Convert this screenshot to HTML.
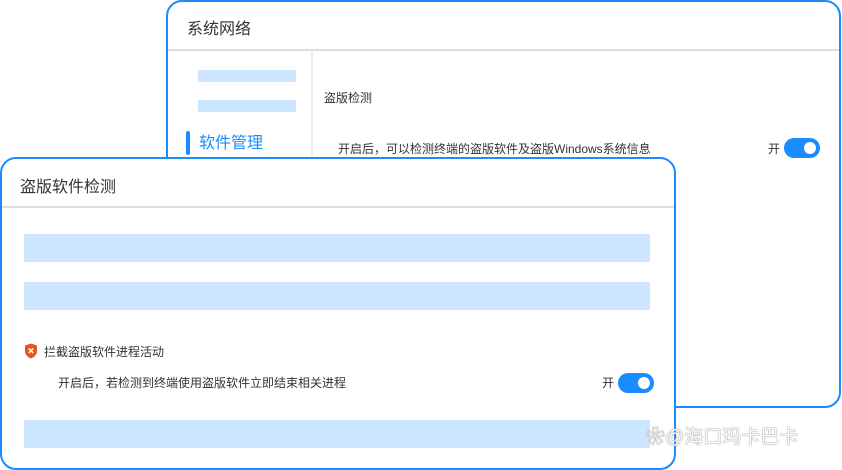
<!DOCTYPE html>
<html><head><meta charset="utf-8"><style>
*{margin:0;padding:0;box-sizing:border-box}
body{width:842px;height:470px;background:#fff;position:relative;overflow:hidden;font-family:"Liberation Sans","Noto Sans CJK SC",sans-serif;color:#333}
.card{position:absolute;background:#fff;border:2px solid #1a8cff;border-radius:16px}
.abs{position:absolute}
.bar{position:absolute;background:#cce6ff}
.tog{position:absolute;width:36px;height:20px;border-radius:10px;background:#1a8cff}
.tog::after{content:"";position:absolute;right:4px;top:4px;width:12px;height:12px;border-radius:50%;background:#fff}
.t12{font-size:12px;line-height:14px}
</style></head><body>
<div class="card" style="left:166px;top:0;width:675px;height:408px">
  <div class="abs" style="left:19px;top:18px;font-size:16px;line-height:20px;color:#333">系统网络</div>
  <div class="abs" style="left:0;top:47px;width:671px;height:2px;background:#ddd"></div>
  <div class="abs" style="left:143px;top:49px;width:2px;height:360px;background:#eee"></div>
  <div class="bar" style="left:30px;top:68px;width:98px;height:12px"></div>
  <div class="bar" style="left:30px;top:98px;width:98px;height:12px"></div>
  <div class="abs" style="left:18px;top:129px;width:4px;height:24px;border-radius:2px;background:#1a8cff"></div>
  <div class="abs" style="left:31px;top:132px;font-size:16px;line-height:20px;color:#1a8cff">软件管理</div>
  <div class="abs t12" style="left:156px;top:89px">盗版检测</div>
  <div class="abs t12" style="left:170px;top:140px">开启后，可以检测终端的盗版软件及盗版Windows系统信息</div>
  <div class="abs t12" style="left:600px;top:140px">开</div>
  <div class="tog" style="left:616px;top:136px"></div>
</div>
<div class="card" style="left:0;top:157px;width:676px;height:313px">
  <div class="abs" style="left:18px;top:19px;font-size:16px;line-height:20px;color:#333">盗版软件检测</div>
  <div class="abs" style="left:0;top:47px;width:672px;height:2px;background:#ddd"></div>
  <div class="bar" style="left:22px;top:75px;width:626px;height:28px"></div>
  <div class="bar" style="left:22px;top:123px;width:626px;height:28px"></div>
  <svg class="abs" style="left:22px;top:184px" width="14" height="16" viewBox="0 0 14 16"><path d="M7 0.5L13 2.5V8C13 11.5 10.5 14 7 15.5C3.5 14 1 11.5 1 8V2.5Z" fill="#e5541c"/><path d="M4.8 5.5L9.2 9.9M9.2 5.5L4.8 9.9" stroke="#fff" stroke-width="1.6"/></svg>
  <div class="abs t12" style="left:42px;top:186px">拦截盗版软件进程活动</div>
  <div class="abs t12" style="left:56px;top:217px">开启后，若检测到终端使用盗版软件立即结束相关进程</div>
  <div class="abs t12" style="left:600px;top:217px">开</div>
  <div class="tog" style="left:616px;top:214px"></div>
  <div class="bar" style="left:22px;top:261px;width:626px;height:28px"></div>
</div>
<div class="abs" style="left:646px;top:427px;font-size:19px;line-height:22px;color:#fff;text-shadow:0 0 1px #999,0 0 1px #999,0 0 1px #999">❀@海口玛卡巴卡</div>
</body></html>
